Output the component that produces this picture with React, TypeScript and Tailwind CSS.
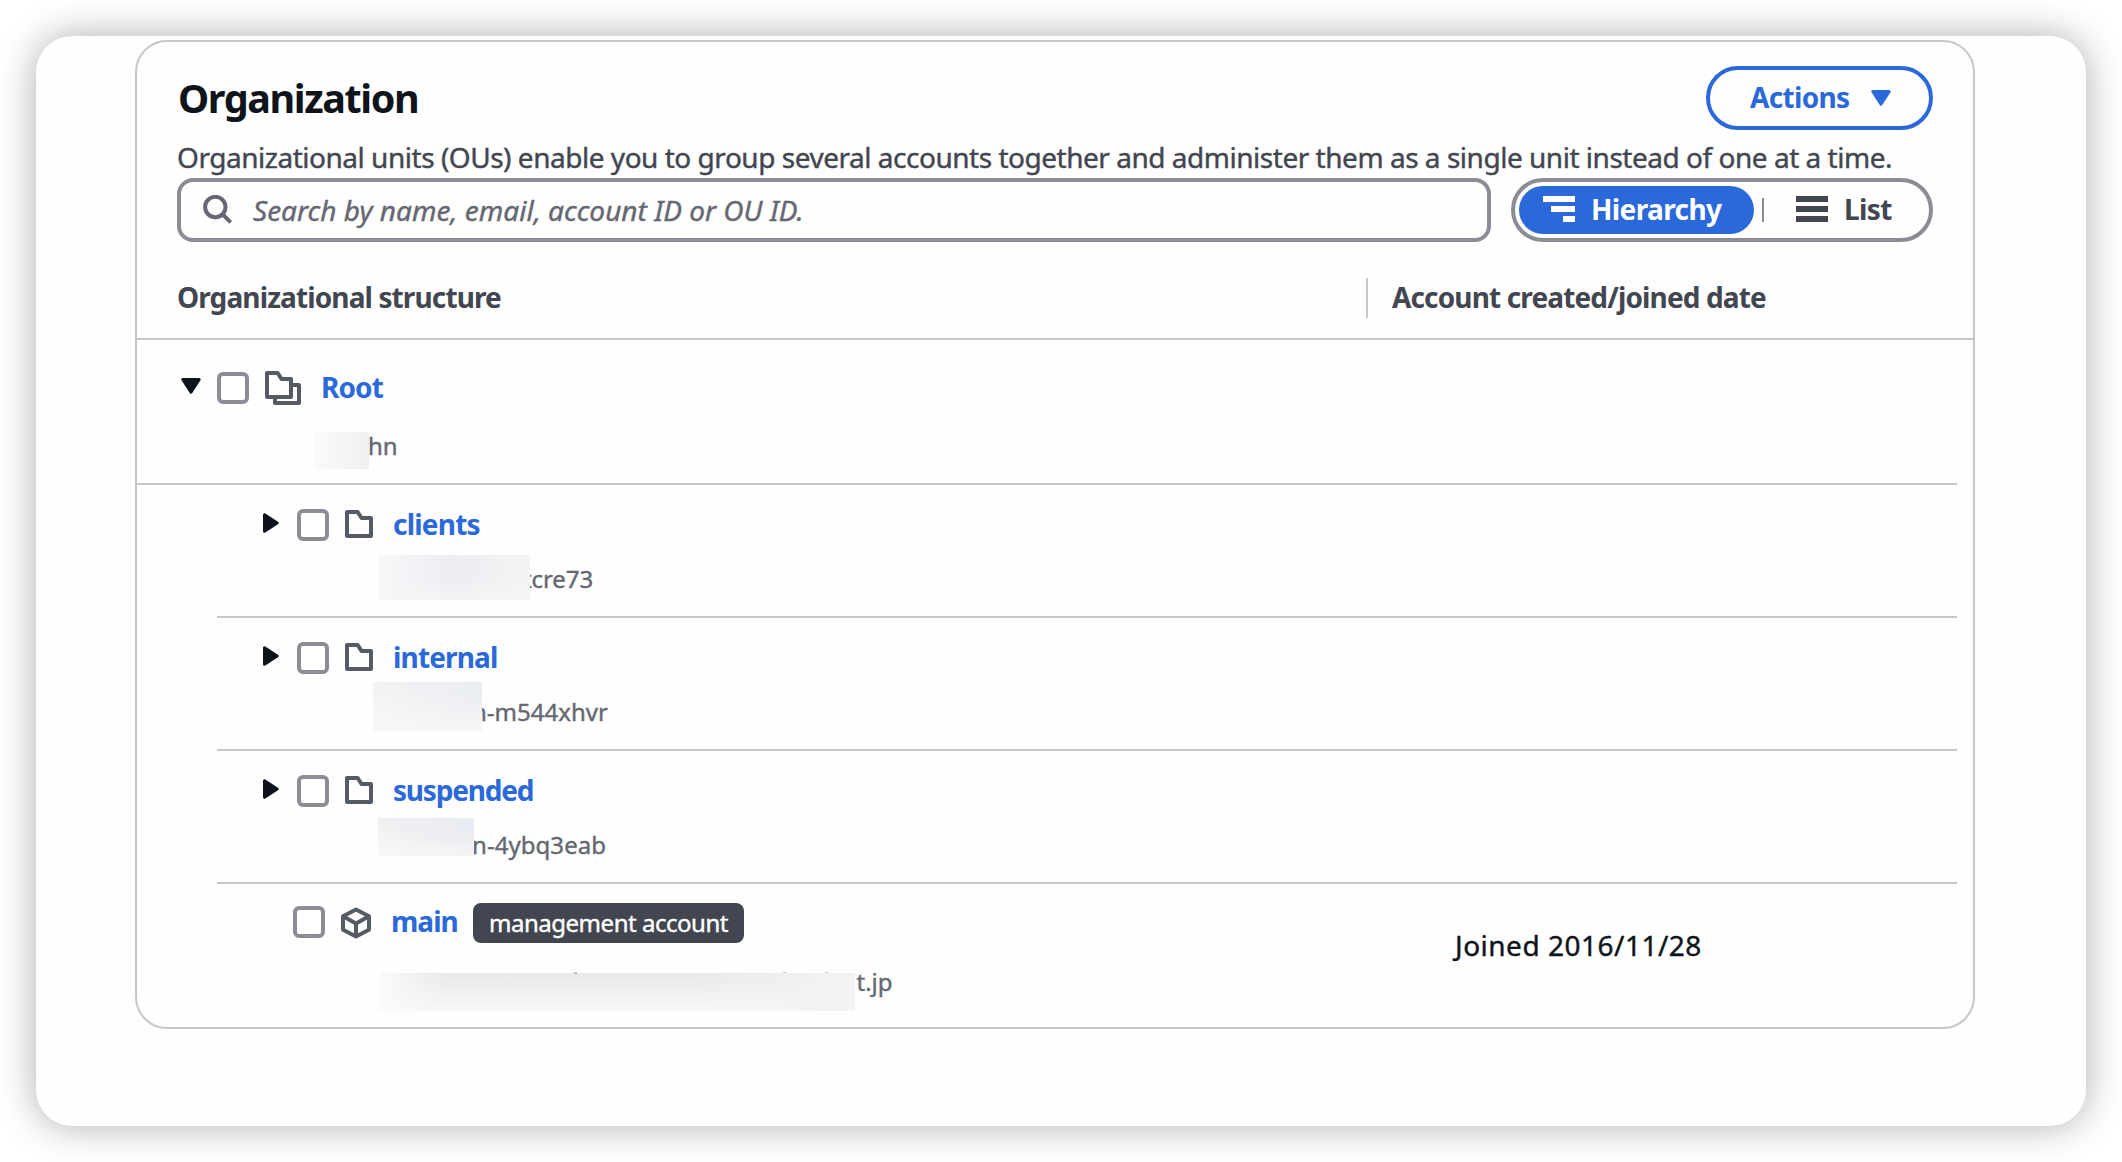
import React from "react";

function FolderIcon() {
  return (
    <svg width="28" height="28" viewBox="0 0 28 28" fill="none" stroke="#545b64" strokeWidth="4" strokeLinejoin="round" className="-mt-0.5 shrink-0">
      <path d="M2 2H12.7L16.5 8H26V26H2Z" />
    </svg>
  );
}

function FoldersIcon() {
  return (
    <svg width="36" height="34" viewBox="0 0 36 34" fill="none" stroke="#545b64" strokeWidth="4" strokeLinejoin="round" className="shrink-0">
      <path d="M2 2H12.7L16.5 8H26V26H2Z" />
      <path d="M10 27V32H34V14H27" />
    </svg>
  );
}

function CubeIcon() {
  return (
    <svg width="30" height="32" viewBox="0 0 30 32" fill="none" stroke="#545b64" strokeWidth="4" strokeLinejoin="round" className="shrink-0">
      <path d="M15 2.4L28 9.3V22.7L15 29.6L2 22.7V9.3Z" />
      <path d="M2 9.3L15 16.4L28 9.3M15 16.4V29.6" />
    </svg>
  );
}

function CaretDown({ className }: { className: string }) {
  return (
    <svg width="20" height="16" viewBox="0 0 20 16" fill="currentColor" stroke="currentColor" strokeWidth="3" strokeLinejoin="round" className={className}>
      <path d="M1.8 1.5H18.2L10 14.2Z" />
    </svg>
  );
}

function CaretRight() {
  return (
    <svg width="16" height="20" viewBox="0 0 16 20" fill="currentColor" stroke="currentColor" strokeWidth="3" strokeLinejoin="round" className="-mt-1 shrink-0 text-[#0f141a]">
      <path d="M1.5 1.8V18.2L14.2 10Z" />
    </svg>
  );
}

function Checkbox({ className = "" }: { className?: string }) {
  return <span className={"size-8 shrink-0 rounded-[6px] border-4 border-[#8c8c94] bg-white " + className} />;
}

type Unit = { name: string; id: string; nameClass: string; maskClass: string; idClass: string };

const units: Unit[] = [
  {
    name: "clients",
    id: "tcre73",
    nameClass: "tracking-[-0.78px]",
    maskClass: "ml-[161px] mt-[14px] h-[45px] w-[152px] bg-gradient-to-r from-[#f6f8f9] via-[#ecedf2] to-[#f4f4f4]",
    idClass: "-ml-[7px] tracking-[-0.1px]",
  },
  {
    name: "internal",
    id: "n-m544xhvr",
    nameClass: "tracking-[-0.84px]",
    maskClass: "ml-[156px] mt-[8px] h-[49px] w-[109px] bg-gradient-to-tr from-[#fafafa] via-[#f1f2f3] to-[#e9ecf3]",
    idClass: "-ml-[10px]",
  },
  {
    name: "suspended",
    id: "n-4ybq3eab",
    nameClass: "tracking-[-1.2px]",
    maskClass: "ml-[161px] mt-[11px] h-[38px] w-[96px] bg-gradient-to-tr from-[#fafafa] via-[#efeff2] to-[#e8ebf4]",
    idClass: "-ml-[2px] tracking-[0.05px]",
  },
];

function UnitRow({ unit }: { unit: Unit }) {
  return (
    <div className="ml-20 mr-4 h-[133px] border-b-2 border-[#c6c6cd] pt-6">
      <div className="flex h-8 items-center pl-[46px]">
        <CaretRight />
        <Checkbox className="ml-[18px] mr-4" />
        <FolderIcon />
        <a className={"-mt-0.5 ml-5 font-bold text-[#2b69db] " + unit.nameClass}>{unit.name}</a>
      </div>
      <div className="flex items-start text-2xl text-[#656871] [-webkit-text-stroke:0.4px]">
        <span className={"relative z-10 flex shrink-0 items-end " + unit.maskClass}>
          <span className="h-1/2 w-full bg-gradient-to-b from-transparent to-[#f6f6f6]/80" />
        </span>
        <span className={"mt-[22px] " + unit.idClass}>{unit.id}</span>
      </div>
    </div>
  );
}

export default function App() {
  return (
    <div className="h-[1162px] w-[2122px] overflow-hidden bg-white p-9 font-['Noto_Sans',sans-serif] text-[28px] leading-8 text-[#424650]">
      <div className="h-[1090px] w-[2050px] rounded-[36px] bg-[#fefefe] pl-[99px] pt-1 shadow-[0_0_38px_rgba(0,0,0,0.32)]">
        <section className="h-[989px] w-[1840px] rounded-[32px] border-2 border-[#c6c6cd] bg-[#fefefe]">
          <header className="px-10 pt-6">
            <div className="flex h-16 items-center justify-between">
              <h2 className="ml-px text-[39.5px] font-bold leading-[48px] tracking-[-1.4px] text-[#0f141a]">Organization</h2>
              <button className="flex h-16 w-[227px] items-center rounded-full border-4 border-[#2b69db] pl-10 font-bold text-[#2b69db]">
                <span className="-mt-0.5 w-[121px] text-left tracking-[-0.67px]">Actions</span>
                <CaretDown className="shrink-0" />
              </button>
            </div>
            <p className="mt-[7px] h-10 whitespace-nowrap leading-10 tracking-[-0.477px] [-webkit-text-stroke:0.4px]">
              Organizational units (OUs) enable you to group several accounts together and administer them as a single unit instead of one at a time.
            </p>
            <div className="mt-px flex gap-5">
              <div className="flex h-16 w-[1314px] items-center rounded-2xl border-4 border-[#8c8c94] pl-[22px] italic text-[#656871]">
                <svg width="30" height="30" viewBox="0 0 30 30" fill="none" stroke="#656871" strokeWidth="4" className="shrink-0">
                  <circle cx="12.3" cy="12" r="10.2" />
                  <path d="M19.3 19L27.7 27.3" />
                </svg>
                <span className="ml-5 [-webkit-text-stroke:0.4px]">Search by name, email, account ID or OU ID.</span>
              </div>
              <div className="flex h-16 w-[422px] items-center rounded-full border-4 border-[#8c8c94] pl-1 font-bold">
                <div className="flex h-12 w-[235px] items-center rounded-full bg-[#2b69db] pl-6 text-white">
                  <svg width="32" height="26" viewBox="0 0 32 26" fill="currentColor" className="-mt-0.5 shrink-0">
                    <path d="M0 0H32V6H0ZM8 10H32V16H8ZM20 20H32V26H20Z" />
                  </svg>
                  <span className="-mt-0.5 ml-4 tracking-[-0.6px]">Hierarchy</span>
                </div>
                <span className="ml-2 h-6 w-0.5 bg-[#8c8c94]" />
                <svg width="32" height="26" viewBox="0 0 32 26" fill="currentColor" className="-mt-0.5 ml-8 shrink-0">
                  <path d="M0 0H32V6H0ZM0 10H32V16H0ZM0 20H32V26H0Z" />
                </svg>
                <span className="-mt-0.5 ml-4 tracking-[-0.6px]">List</span>
              </div>
            </div>
          </header>

          <div className="mt-4 flex h-[82px] items-center border-b-2 border-[#c6c6cd] pl-10 font-bold">
            <span className="-mt-0.5 w-[1189px] tracking-[-0.88px]">Organizational structure</span>
            <span className="h-10 w-0.5 bg-[#c6c6cd]" />
            <span className="-mt-0.5 ml-6 tracking-[-0.86px]">Account created/joined date</span>
          </div>

          <div className="mr-4 h-[145px] border-b-2 border-[#c6c6cd] pt-8">
            <div className="flex h-8 items-center pl-11">
              <CaretDown className="-mt-1 shrink-0 text-[#0f141a]" />
              <Checkbox className="mx-4" />
              <FoldersIcon />
              <a className="-mt-0.5 ml-5 font-bold tracking-[-0.9px] text-[#2b69db]">Root</a>
            </div>
            <div className="flex items-start text-2xl leading-8 text-[#656871] [-webkit-text-stroke:0.4px]">
              <span className="relative z-10 ml-[177px] mt-7 h-[37px] w-[55px] shrink-0 bg-gradient-to-r from-[#f9fafa] to-[#f0f0f2]" />
              <span className="-ml-px mt-[26px]">hn</span>
            </div>
          </div>

          {units.map((u) => (
            <UnitRow key={u.name} unit={u} />
          ))}

          <div className="ml-20 mr-4 flex h-[143px]">
            <div className="w-[1238px] pt-[19px]">
              <div className="flex h-10 items-center pl-[76px]">
                <Checkbox className="-mt-0.5 mr-4" />
                <CubeIcon />
                <a className="-mt-1 ml-5 w-[82px] font-bold tracking-[-0.97px] text-[#2b69db]">main</a>
                <span className="h-10 w-[271px] rounded-lg bg-[#424650] pl-4 text-2xl leading-10 tracking-[-0.48px] text-white [-webkit-text-stroke:0.4px]">management account</span>
              </div>
              <div className="flex items-start text-2xl text-[#656871] [-webkit-text-stroke:0.4px]">
                <span className="relative ml-[163px] mt-[30px] h-[38px] w-[475px] shrink-0 bg-gradient-to-b from-[#e9e9ea] to-[#f7f7f7]">
                  <span className="absolute inset-y-0 left-0 w-16 bg-gradient-to-r from-[#fafafa] to-transparent" />
                  <span className="absolute inset-y-0 right-0 w-40 bg-gradient-to-l from-[#f3f3f4] to-transparent" />
                  <span className="absolute -top-px left-[194px] h-0.5 w-[3px] bg-[#bcbdc1]" />
                  <span className="absolute -top-px left-[403px] h-px w-[3px] bg-[#c4c5c8]" />
                  <span className="absolute -top-px left-[445px] h-px w-[3px] bg-[#c4c5c8]" />
                </span>
                <span className="ml-[1.5px] mt-[23px]">t.jp</span>
              </div>
            </div>
            <span className="mt-[45px] tracking-[0.5px] text-[#0f141a] [-webkit-text-stroke:0.4px]">Joined 2016/11/28</span>
          </div>
        </section>
      </div>
    </div>
  );
}
